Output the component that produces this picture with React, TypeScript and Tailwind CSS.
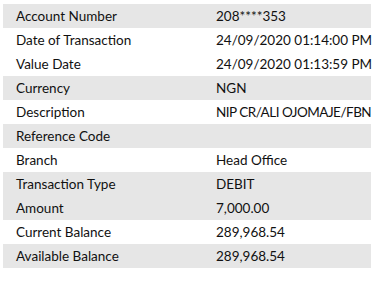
const rows: { label: string; value: string; shaded: boolean; tight?: boolean }[] = [
  { label: 'Account Number', value: '208****353', shaded: true },
  { label: 'Date of Transaction', value: '24/09/2020 01:14:00 PM', shaded: false },
  { label: 'Value Date', value: '24/09/2020 01:13:59 PM', shaded: false },
  { label: 'Currency', value: 'NGN', shaded: true },
  { label: 'Description', value: 'NIP CR/ALI OJOMAJE/FBN', shaded: false, tight: true },
  { label: 'Reference Code', value: '', shaded: true },
  { label: 'Branch', value: 'Head Office', shaded: false },
  { label: 'Transaction Type', value: 'DEBIT', shaded: true },
  { label: 'Amount', value: '7,000.00', shaded: true },
  { label: 'Current Balance', value: '289,968.54', shaded: false },
  { label: 'Available Balance', value: '289,968.54', shaded: true },
];

export default function App() {
  return (
    <div className="w-[378px] h-[284px] bg-white pt-[4px] pl-[3px] font-['Lato','Open_Sans',sans-serif] text-[13.5px] text-[#111]">
      <div className="w-[368px] flex flex-col">
        {rows.map((r) => (
          <div
            key={r.label}
            className={`h-[24px] flex items-center ${r.shaded ? 'bg-[#e6e6e6]' : 'bg-white'}`}
          >
            <span className="w-[213px] shrink-0 pl-[13px] whitespace-nowrap">{r.label}</span>
            <span className={`shrink-0 whitespace-nowrap ${r.tight ? 'tracking-[-0.5px]' : ''}`}>{r.value}</span>
          </div>
        ))}
      </div>
    </div>
  );
}
